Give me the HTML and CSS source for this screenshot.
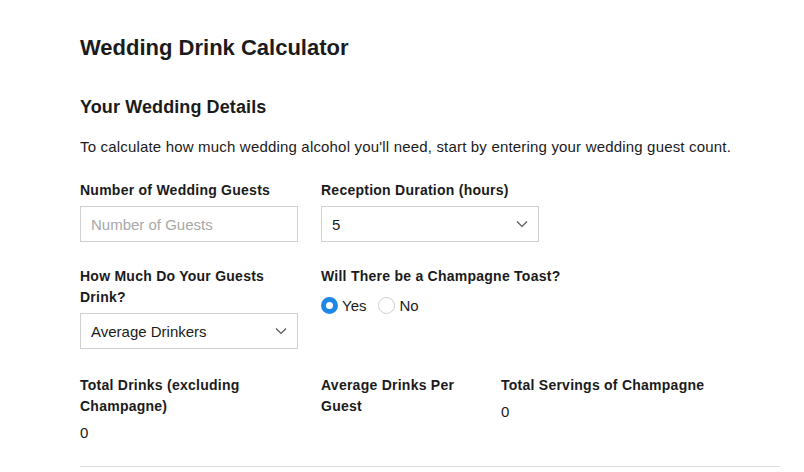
FILE: index.html
```html
<!DOCTYPE html>
<html lang="en">
<head>
<meta charset="utf-8">
<title>Wedding Drink Calculator</title>
<link rel="stylesheet" href="styles.css">
</head>
<body>
<main class="calc">
  <h1 class="title">Wedding Drink Calculator</h1>
  <h2 class="subtitle">Your Wedding Details</h2>
  <p class="intro">To calculate how much wedding alcohol you'll need, start by entering your wedding guest count.</p>

  <div class="form-grid">
    <div class="field">
      <div class="label">Number of Wedding Guests</div>
      <div class="control"><span class="placeholder">Number of Guests</span></div>
    </div>
    <div class="field">
      <div class="label">Reception Duration (hours)</div>
      <div class="control select"><span>5</span>
        <svg class="chev" width="12" height="8" viewBox="0 0 12 8"><polyline points="1,1.5 6,6.5 11,1.5" fill="none" stroke="#555" stroke-width="1.2"/></svg>
      </div>
    </div>
    <div class="field">
      <div class="label">How Much Do Your Guests Drink?</div>
      <div class="control select"><span>Average Drinkers</span>
        <svg class="chev" width="12" height="8" viewBox="0 0 12 8"><polyline points="1,1.5 6,6.5 11,1.5" fill="none" stroke="#555" stroke-width="1.2"/></svg>
      </div>
    </div>
    <div class="field">
      <div class="label nowrap">Will There be a Champagne Toast?</div>
      <div class="radios">
        <span class="radio"><span class="dot on"></span>Yes</span>
        <span class="radio"><span class="dot"></span>No</span>
      </div>
    </div>
  </div>

  <div class="results">
    <div class="result">
      <div class="label">Total Drinks (excluding Champagne)</div>
      <div class="value">0</div>
    </div>
    <div class="result">
      <div class="label">Average Drinks Per Guest</div>
      <div class="value"></div>
    </div>
    <div class="result">
      <div class="label">Total Servings of Champagne</div>
      <div class="value">0</div>
    </div>
  </div>
  <hr class="divider">
</main>
</body>
</html>
```
FILE: styles.css
```css
html, body { margin: 0; padding: 0; background: #fff; }
body {
  font-family: "Liberation Sans", Arial, sans-serif;
  color: #1b1b1b;
}
.calc {
  width: 700px;
  padding: 34px 0 0 80px;
}
.title {
  margin: 0;
  font-size: 22px;
  line-height: 28px;
  font-weight: bold;
}
.subtitle {
  margin: 33px 0 0;
  font-size: 18px;
  line-height: 24px;
  font-weight: bold;
  letter-spacing: 0.1px;
}
.intro {
  margin: 17px 0 0;
  font-size: 15px;
  line-height: 22px;
  letter-spacing: 0.18px;
}
.form-grid {
  margin-top: 22px;
  display: grid;
  grid-template-columns: 218px 1fr;
  column-gap: 23px;
  row-gap: 24px;
}
.field { width: 218px; }
.label {
  font-size: 14px;
  line-height: 21px;
  font-weight: bold;
  letter-spacing: 0.25px;
}
.nowrap { white-space: nowrap; }
.control {
  margin-top: 5px;
  height: 36px;
  box-sizing: border-box;
  border: 1px solid #d0d0d0;
  display: flex;
  align-items: center;
  justify-content: space-between;
  padding: 0 10px;
  font-size: 15px;
}
.placeholder { color: #a8a8a8; }
.chev { display: block; }
.radios {
  margin-top: 8px;
  display: flex;
  align-items: center;
  gap: 12px;
  font-size: 15px;
  line-height: 21px;
}
.radio { display: flex; align-items: center; gap: 4px; }
.dot {
  width: 17px;
  height: 17px;
  box-sizing: border-box;
  border-radius: 50%;
  border: 1px solid #cfcfcf;
  background: #fff;
}
.dot.on {
  border: 5.5px solid #1e88e5;
}
.results {
  margin-top: 26px;
  display: grid;
  grid-template-columns: 241px 180px 1fr;
}
.result .label { padding-right: 20px; }
.value {
  margin-top: 5px;
  font-size: 15px;
  line-height: 21px;
}
.divider {
  margin: 23px 0 0;
  border: 0;
  border-top: 1px solid #dcdcdc;
  height: 0;
}
```
